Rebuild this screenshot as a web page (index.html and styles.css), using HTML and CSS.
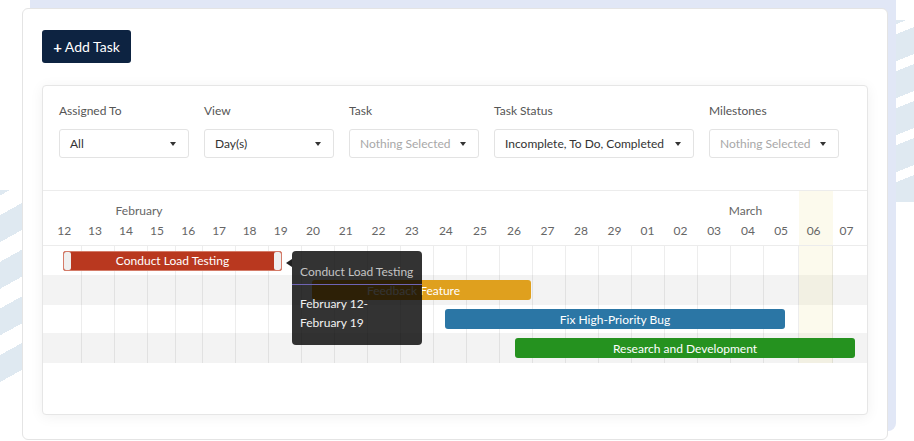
FILE: index.html
```html
<!DOCTYPE html>
<html lang="en">
<head>
<meta charset="utf-8">
<title>Gantt</title>
<link rel="stylesheet" href="styles.css">
</head>
<body>
<div class="stripes-left"></div>
<div class="stripes-right"></div>
<div class="card">
  <button class="add-btn"><span class="plus">+</span> Add Task</button>
  <div class="panel">
    <div class="filters">
      <div class="field w130">
        <div class="label">Assigned To</div>
        <div class="select"><span>All</span><i class="caret"></i></div>
      </div>
      <div class="field w130">
        <div class="label">View</div>
        <div class="select"><span>Day(s)</span><i class="caret"></i></div>
      </div>
      <div class="field w130">
        <div class="label">Task</div>
        <div class="select"><span class="ph">Nothing Selected</span><i class="caret"></i></div>
      </div>
      <div class="field w200">
        <div class="label">Task Status</div>
        <div class="select"><span>Incomplete, To Do, Completed</span><i class="caret"></i></div>
      </div>
      <div class="field w130">
        <div class="label">Milestones</div>
        <div class="select"><span class="ph">Nothing Selected</span><i class="caret"></i></div>
      </div>
    </div>
    <div class="gantt">
      <div class="g-alt r3"></div>
      <div class="g-alt r5"></div>
      <div class="g-today"></div>
      <div class="g-lines">
        <span></span><span></span><span></span><span></span><span></span>
        <span></span><span></span><span></span><span></span><span></span>
        <span></span><span></span><span></span><span></span><span></span>
        <span></span><span></span><span></span><span></span><span></span>
        <span></span><span></span><span></span><span></span><span></span>
      </div>
      <div class="g-head">
        <div class="months">
          <span class="m-feb">February</span>
          <span class="m-mar">March</span>
        </div>
        <div class="dates">
          <span>12</span><span>13</span><span>14</span><span>15</span><span>16</span>
          <span>17</span><span>18</span><span>19</span><span>20</span><span>21</span>
          <span>22</span><span>23</span><span>24</span><span>25</span><span>26</span>
          <span>27</span><span>28</span><span>29</span><span>01</span><span>02</span>
          <span>03</span><span>04</span><span>05</span><span>06</span><span>07</span>
        </div>
      </div>
      <div class="task r2">
        <div class="bar red" style="margin-left:20px;width:219px"><i class="handle"></i><span class="bar-text">Conduct Load Testing</span><i class="handle"></i></div>
      </div>
      <div class="task r3">
        <div class="bar orange" style="margin-left:269px;width:219px"><span class="bar-text shift">Feedback Feature</span></div>
      </div>
      <div class="task r4">
        <div class="bar blue" style="margin-left:402px;width:340px"><span class="bar-text">Fix High-Priority Bug</span></div>
      </div>
      <div class="task r5">
        <div class="bar green" style="margin-left:472px;width:340px"><span class="bar-text">Research and Development</span></div>
      </div>
      <div class="tooltip">
        <div class="tt-title">Conduct Load Testing</div>
        <div class="tt-body">February 12-<br>February 19</div>
      </div>
    </div>
  </div>
</div>
</body>
</html>
```
FILE: styles.css
```css
* { box-sizing: border-box; }
html, body {
  margin: 0;
  padding: 0;
}
body {
  width: 914px;
  height: 441px;
  overflow: hidden;
  position: relative;
  font-family: "Lato", "Open Sans", sans-serif;
  color: #333;
}

/* decorative stripes */
.stripes-left {
  position: absolute;
  left: 0;
  top: 190px;
  width: 22px;
  height: 192px;
  background: repeating-linear-gradient(151deg, #dfe9f1 0 4.8px, transparent 4.8px 22px, #dfe9f1 22px 40.8px);
}
.stripes-right {
  position: absolute;
  left: 896px;
  top: 20px;
  width: 18px;
  height: 182px;
  background: repeating-linear-gradient(158deg, #dfe9f1 0 3.9px, transparent 3.9px 13.2px, #dfe9f1 13.2px 34.3px);
}

.card {
  position: relative;
  margin: 8px 0 0 22px;
  width: 866px;
  height: 432px;
  border: 1px solid #e4e4e4;
  border-radius: 6px;
  background: #fff;
  padding: 21px 19px 0;
}
.card::before {
  content: "";
  position: absolute;
  left: 7px;
  top: -30px;
  right: -9px;
  bottom: 8px;
  background: #e1e7f6;
  border-radius: 8px;
  z-index: -1;
}

.add-btn {
  display: flex;
  align-items: center;
  justify-content: center;
  width: 89px;
  height: 33px;
  margin: 0 0 22px;
  padding: 0;
  border: 0;
  border-radius: 3px;
  background: #0d2341;
  color: #fff;
  font-family: inherit;
  font-size: 14px;
  gap: 3px;
}
.add-btn .plus {
  font-weight: 700;
  font-size: 15px;
}

.panel {
  width: 826px;
  height: 330px;
  border: 1px solid #e6e6e6;
  border-radius: 4px;
  box-shadow: 0 2px 14px rgba(0, 0, 0, 0.06);
  display: flex;
  flex-direction: column;
  background: #fff;
}

.filters {
  display: flex;
  gap: 15px;
  padding: 16px 16px 32px;
  border-bottom: 1px solid #ececec;
}
.field.w130 { width: 130px; }
.field.w200 { width: 200px; }
.label {
  font-size: 12px;
  line-height: 18px;
  color: #555;
  margin-bottom: 9px;
}
.select {
  height: 29px;
  border: 1px solid #e3e3e3;
  border-radius: 3px;
  display: flex;
  align-items: center;
  justify-content: space-between;
  padding: 0 12px 0 10px;
  font-size: 12px;
  color: #333;
  white-space: nowrap;
}
.select .ph { color: #a8a8a8; }
.caret {
  width: 0;
  height: 0;
  border-left: 3.5px solid transparent;
  border-right: 3.5px solid transparent;
  border-top: 4px solid #333;
}

/* gantt */
.gantt {
  --cols: 39.3px 33px 33px 27.4px 27.6px repeat(17, 33px) 34.7px 33.7px 34.3px;
  --hcols: 30.65px 30.85px 31px 31.15px 31.15px 30.7px 30.35px 31.8px 32.85px 32.5px 33px 33.85px 34.15px 34.15px 33.85px 33.35px 33.65px 33.35px 32.5px 33.3px 34.15px 33.7px 32.5px 32.5px 33.4px;
  position: relative;
  flex: 1;
  display: grid;
  grid-template-columns: var(--cols);
  grid-template-rows: 55px 29px 30px 28px 30px 1fr;
}
.g-alt { background: #f3f3f3; }
.g-alt.r3 { grid-area: 3 / 1 / 4 / -1; }
.g-alt.r5 { grid-area: 5 / 1 / 6 / -1; }
.g-today {
  grid-area: 1 / 24 / 6 / 25;
  background: rgba(240, 228, 150, 0.17);
}
.g-lines {
  grid-area: 2 / 1 / 6 / -1;
  display: grid;
  grid-template-columns: var(--cols);
}
.g-lines span { border-right: 1px solid rgba(0, 0, 0, 0.07); }
.g-lines span:last-child { border-right: 0; }

.g-head {
  grid-area: 1 / 1 / 2 / -1;
  padding: 10px 0 4px 6px;
  border-bottom: 1px solid #ececec;
  font-size: 12px;
  line-height: 20px;
  color: #666;
}
.months, .dates {
  display: grid;
  grid-template-columns: var(--hcols);
}
.months span {
  white-space: nowrap;
  justify-self: center;
  margin-right: 5px;
}
.m-feb { grid-column: 3 / 5; }
.m-mar { grid-column: 22 / 23; }
.dates span { text-align: center; }

.task {
  display: flex;
  align-items: center;
}
.task.r2 { grid-area: 2 / 1 / 3 / -1; }
.task.r3 { grid-area: 3 / 1 / 4 / -1; }
.task.r4 { grid-area: 4 / 1 / 5 / -1; }
.task.r5 { grid-area: 5 / 1 / 6 / -1; }

.bar {
  height: 20px;
  border-radius: 3px;
  display: flex;
  align-items: center;
  color: #fff;
  font-size: 12px;
  white-space: nowrap;
}
.bar-text { flex: 1; text-align: center; }
.bar-text.shift { padding-right: 16px; }
.bar.red {
  background: #b9381f;
  border: 1px solid #d47b68;
  border-radius: 2px;
}
.handle {
  width: 7px;
  height: 100%;
  background: #efefef;
  border-radius: 2px;
}
.bar.orange { background: #dfa01e; }
.bar.blue { background: #2b76a5; }
.bar.green { background: #25921f; }

.tooltip {
  position: absolute;
  left: 249px;
  top: 60px;
  width: 130px;
  height: 94px;
  background: rgba(0, 0, 0, 0.8);
  border-radius: 4px;
  color: #f2f2f2;
  font-size: 12px;
}
.tooltip::before {
  content: "";
  position: absolute;
  left: -6px;
  top: 8px;
  border-top: 4px solid transparent;
  border-bottom: 4px solid transparent;
  border-right: 6px solid #222;
}
.tt-title {
  padding: 12px 8px 3px;
  line-height: 18px;
  color: #c4c4c4;
  border-bottom: 1px solid #6e64b4;
}
.tt-body {
  padding: 9px 8px 0;
  line-height: 19px;
}
```
